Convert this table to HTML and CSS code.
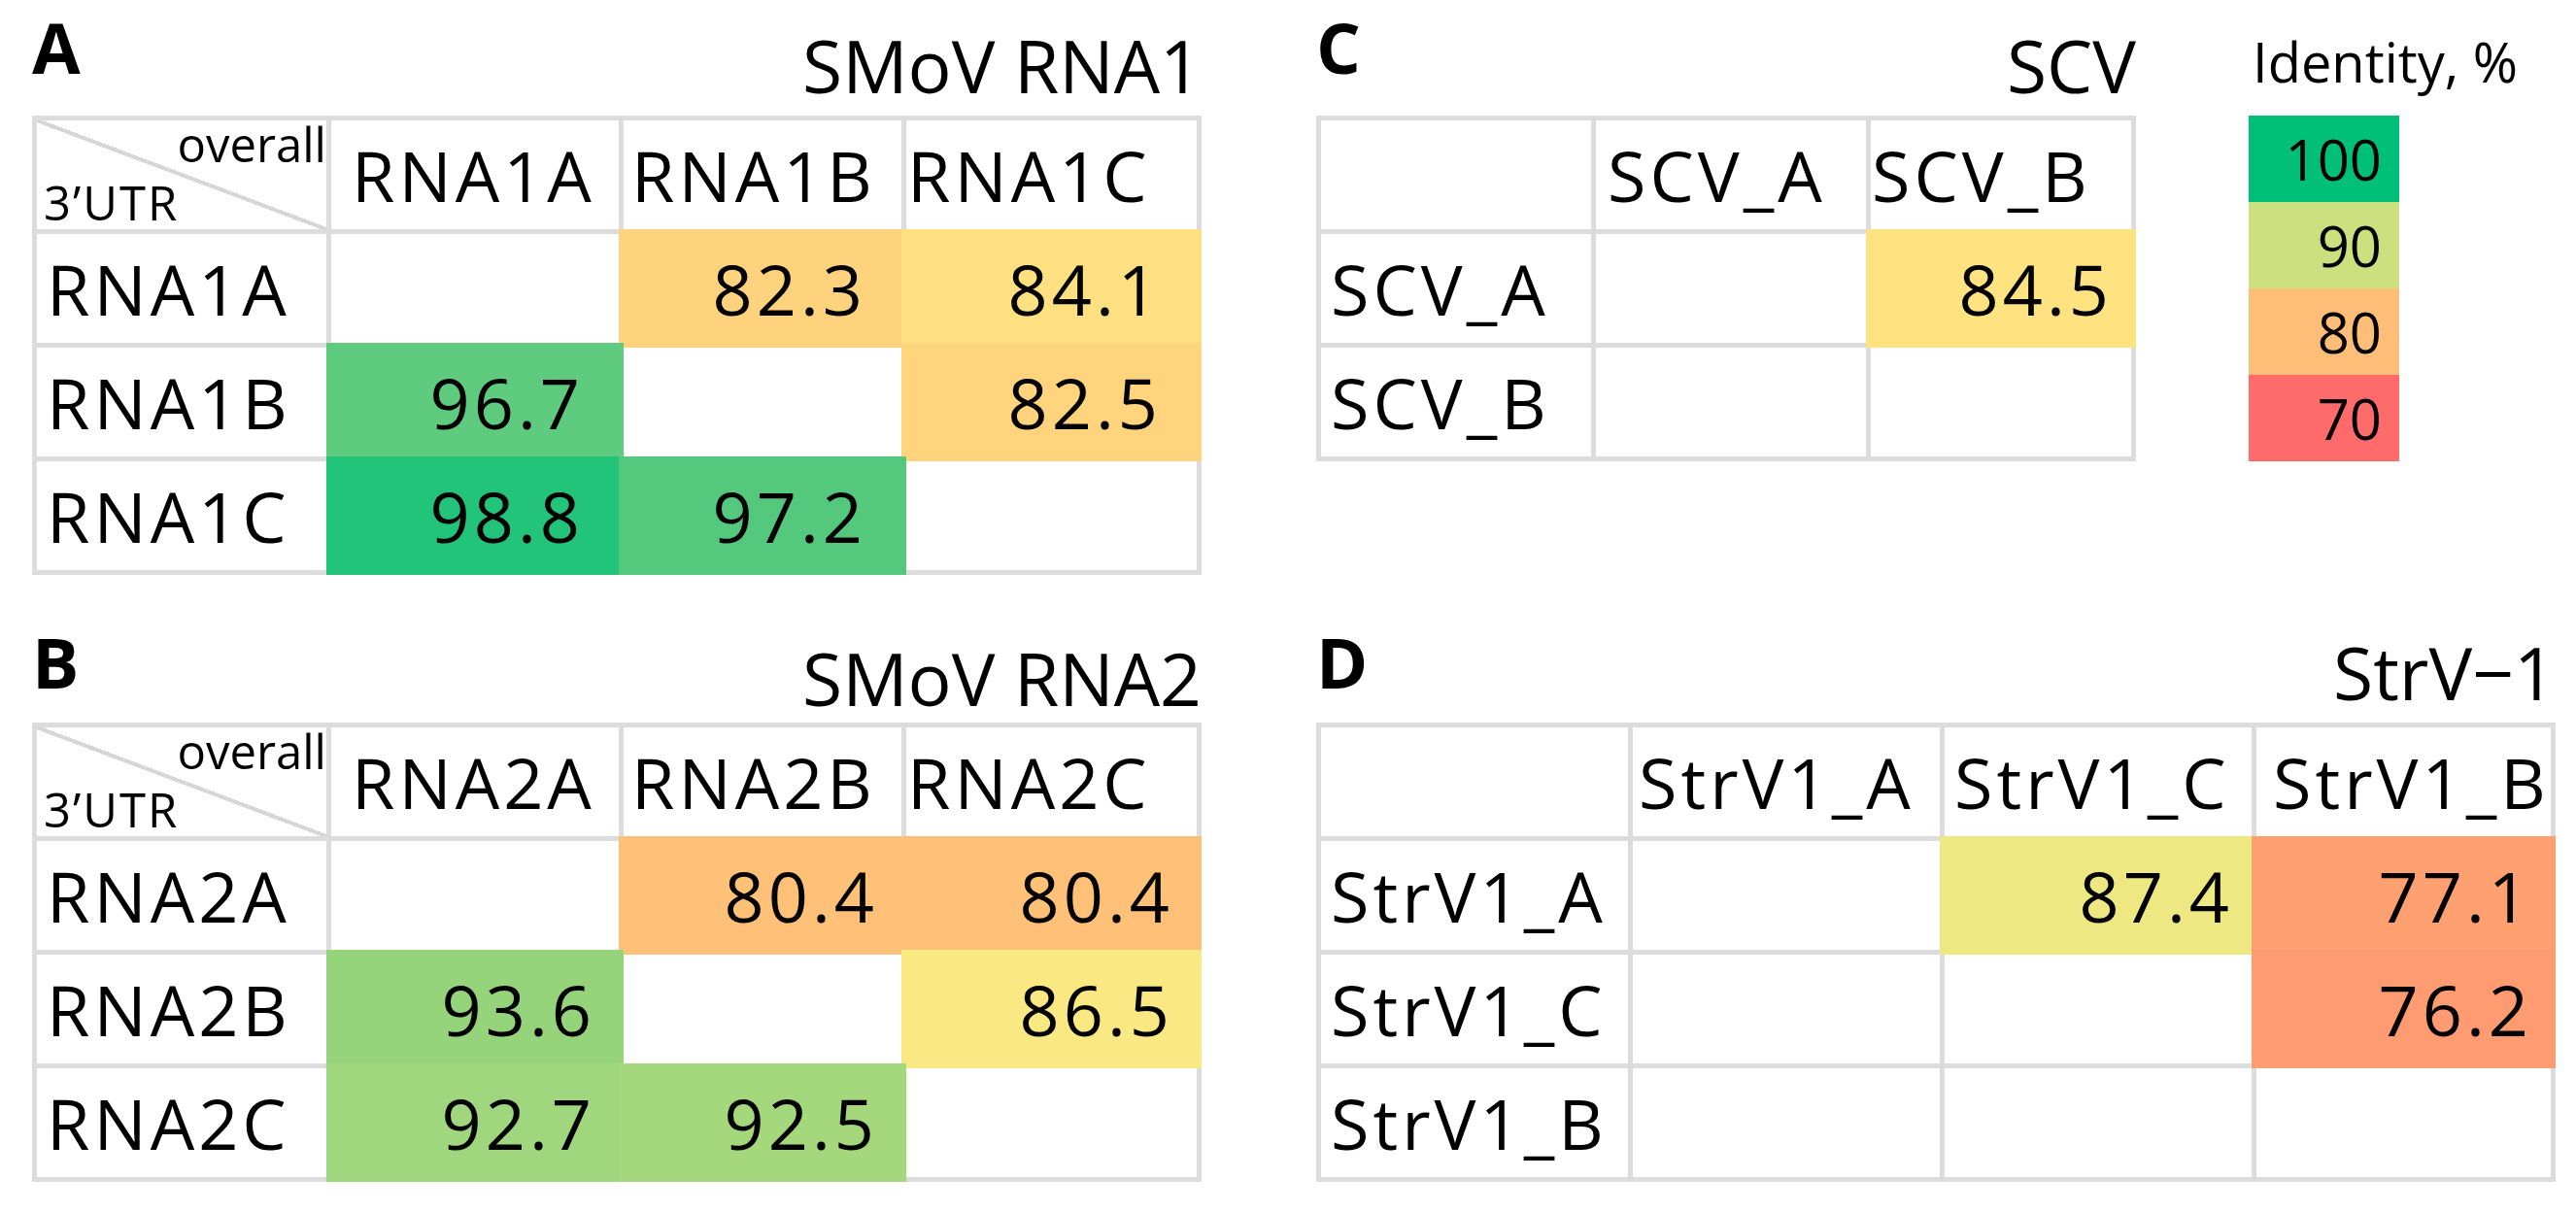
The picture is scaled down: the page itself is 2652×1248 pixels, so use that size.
FILE: index.html
```html
<!DOCTYPE html>
<html lang="en">
<head>
<meta charset="utf-8">
<title>Sequence identity matrices</title>
<link rel="stylesheet" href="styles.css">
</head>
<body>
<div class="figure">

  <section class="panel">
    <header class="panel-head">
      <span class="panel-label">A</span>
      <span class="panel-title">SMoV RNA1</span>
    </header>
    <div class="matrix matrix--rna matrix--a">
      <div class="cell corner"><span class="corner-top">overall</span><span class="corner-bottom">3’UTR</span></div>
      <div class="cell cell--head ind-21">RNA1A</div>
      <div class="cell cell--head ind-8">RNA1B</div>
      <div class="cell cell--head ind-1">RNA1C</div>

      <div class="cell cell--row">RNA1A</div>
      <div class="cell"></div>
      <div class="cell cell--num v823">82.3</div>
      <div class="cell cell--num v841">84.1</div>

      <div class="cell cell--row">RNA1B</div>
      <div class="cell cell--num v967">96.7</div>
      <div class="cell"></div>
      <div class="cell cell--num v825">82.5</div>

      <div class="cell cell--row">RNA1C</div>
      <div class="cell cell--num v988">98.8</div>
      <div class="cell cell--num v972">97.2</div>
      <div class="cell"></div>
    </div>
  </section>

  <div class="top-right">
    <section class="panel">
      <header class="panel-head">
        <span class="panel-label">C</span>
        <span class="panel-title">SCV</span>
      </header>
      <div class="matrix matrix--scv matrix--c">
        <div class="cell"></div>
        <div class="cell cell--head ind-12">SCV_A</div>
        <div class="cell cell--head ind-1">SCV_B</div>

        <div class="cell cell--row">SCV_A</div>
        <div class="cell"></div>
        <div class="cell cell--num v845">84.5</div>

        <div class="cell cell--row">SCV_B</div>
        <div class="cell"></div>
        <div class="cell"></div>
      </div>
    </section>

    <aside class="legend">
      <div class="legend-title">Identity, %</div>
      <div class="legend-scale">
        <div class="swatch swatch--100">100</div>
        <div class="swatch swatch--90">90</div>
        <div class="swatch swatch--80">80</div>
        <div class="swatch swatch--70">70</div>
      </div>
    </aside>
  </div>

  <section class="panel">
    <header class="panel-head panel-head--low">
      <span class="panel-label">B</span>
      <span class="panel-title panel-title--b">SMoV RNA2</span>
    </header>
    <div class="matrix matrix--rna matrix--b">
      <div class="cell corner"><span class="corner-top">overall</span><span class="corner-bottom">3’UTR</span></div>
      <div class="cell cell--head ind-21">RNA2A</div>
      <div class="cell cell--head ind-8">RNA2B</div>
      <div class="cell cell--head ind-1">RNA2C</div>

      <div class="cell cell--row">RNA2A</div>
      <div class="cell"></div>
      <div class="cell cell--num v804">80.4</div>
      <div class="cell cell--num v804">80.4</div>

      <div class="cell cell--row">RNA2B</div>
      <div class="cell cell--num v936">93.6</div>
      <div class="cell"></div>
      <div class="cell cell--num v865">86.5</div>

      <div class="cell cell--row">RNA2C</div>
      <div class="cell cell--num v927">92.7</div>
      <div class="cell cell--num v925">92.5</div>
      <div class="cell"></div>
    </div>
  </section>

  <section class="panel">
    <header class="panel-head panel-head--low">
      <span class="panel-label">D</span>
      <span class="panel-title panel-title--d">StrV−1</span>
    </header>
    <div class="matrix matrix--strv matrix--d">
      <div class="cell"></div>
      <div class="cell cell--head ind-6">StrV1_A</div>
      <div class="cell cell--head ind-10">StrV1_C</div>
      <div class="cell cell--head ind-17">StrV1_B</div>

      <div class="cell cell--row">StrV1_A</div>
      <div class="cell"></div>
      <div class="cell cell--num v874">87.4</div>
      <div class="cell cell--num v771">77.1</div>

      <div class="cell cell--row">StrV1_C</div>
      <div class="cell"></div>
      <div class="cell"></div>
      <div class="cell cell--num v762">76.2</div>

      <div class="cell cell--row">StrV1_B</div>
      <div class="cell"></div>
      <div class="cell"></div>
      <div class="cell"></div>
    </div>
  </section>

</div>
</body>
</html>
```

FILE: styles.css
```css
* {
  box-sizing: border-box;
}

body {
  margin: 0;
  background: #ffffff;
  color: #000000;
  font-family: "Open Sans", "Noto Sans", sans-serif;
}

.figure {
  display: grid;
  grid-template-columns: 1322px auto;
  row-gap: 53px;
  padding: 12px 0 0 33px;
  align-items: start;
  justify-items: start;
}

/* ---------- panel header ---------- */
.panel-head {
  display: flex;
  justify-content: space-between;
  align-items: flex-start;
  height: 107px;
}

.panel-head--low {
  height: 99px;
}

.panel-label {
  font-weight: 700;
  font-size: 72px;
  line-height: 1;
}

.panel-title {
  font-size: 75px;
  line-height: 1;
  margin-top: 18px;
  white-space: nowrap;
}

.panel-title--b {
  margin-top: 16px;
}

.panel-title--d {
  margin-top: 10px;
}

/* ---------- matrix ---------- */
.matrix {
  display: grid;
  gap: 5px;
  padding: 5px;
  background: #dcdcdc;
  grid-auto-rows: 112px;
  font-size: 72px;
  letter-spacing: 4px;
  line-height: 1;
}

.matrix--rna {
  grid-template-columns: 298px 296px 286px 299px;
}

.matrix--scv {
  grid-template-columns: 278px 278px 268px;
}

.matrix--strv {
  grid-template-columns: 316px 316px 316px 303px;
}

.cell {
  background: #ffffff;
  display: flex;
  align-items: center;
  white-space: nowrap;
}

.cell--row {
  padding-left: 10px;
}

.ind-1 { padding-left: 1px; }
.ind-6 { padding-left: 6px; }
.ind-8 { padding-left: 8px; }
.ind-10 { padding-left: 10px; }
.ind-12 { padding-left: 12px; }
.ind-17 { padding-left: 17px; }
.ind-21 { padding-left: 21px; }

/* filled cells cover the surrounding grid lines */
.cell--num {
  justify-content: flex-end;
  margin: -5px;
  padding-right: 27px;
}

.matrix--a .cell--num {
  padding-right: 41px;
}

.matrix--b .cell--num {
  padding-right: 29px;
}

.matrix--c .cell--num,
.matrix--d .cell--num {
  padding-right: 24px;
}

/* corner cell with diagonal */
.corner {
  flex-direction: column;
  justify-content: space-between;
  align-items: stretch;
  padding: 0 0 3px 7px;
  font-size: 49px;
  letter-spacing: 0;
  background: linear-gradient(to top right,
    #ffffff calc(50% - 2px),
    #d6d6d6 calc(50% - 2px),
    #d6d6d6 calc(50% + 2px),
    #ffffff calc(50% + 2px));
}

.corner-top {
  align-self: flex-end;
}

.corner-bottom {
  align-self: flex-start;
  letter-spacing: 2px;
}

/* identity colours */
.v823 { background: #ffd37d; }
.v841 { background: #ffe080; }
.v825 { background: #ffd47d; }
.v967 { background: #5ecb7e; }
.v988 { background: #22c47a; }
.v972 { background: #54c87d; }
.v804 { background: #ffc178; }
.v936 { background: #96d47c; }
.v865 { background: #fae882; }
.v927 { background: #a0d67d; }
.v925 { background: #a5d77d; }
.v845 { background: #ffe380; }
.v874 { background: #eee882; }
.v771 { background: #ffa070; }
.v762 { background: #ff9b70; }

/* ---------- top right: panel C + legend ---------- */
.top-right {
  display: flex;
  align-items: flex-start;
}

.legend {
  display: flex;
  flex-direction: column;
  margin: 23px 0 0 116px;
}

.legend-title {
  font-size: 56px;
  line-height: 1;
  margin-left: 4px;
  white-space: nowrap;
}

.legend-scale {
  margin-top: 28px;
  width: 155px;
}

.swatch {
  height: 89px;
  display: flex;
  align-items: center;
  justify-content: flex-end;
  padding-right: 18px;
  font-size: 58px;
  line-height: 1;
}

.swatch--100 { background: #00bf78; }
.swatch--90 { background: #cce080; }
.swatch--80 { background: #ffbe78; }
.swatch--70 { background: #ff6b6b; }
```
